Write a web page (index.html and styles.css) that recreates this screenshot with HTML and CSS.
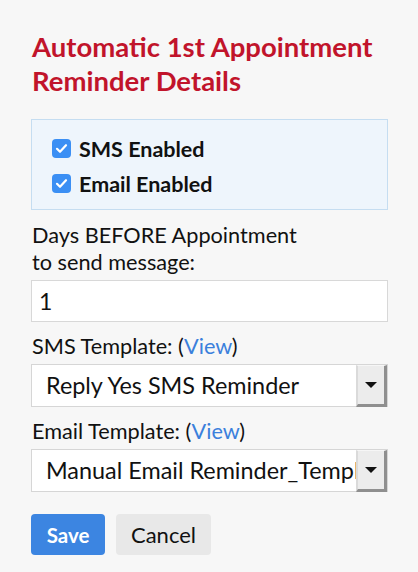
FILE: index.html
```html
<!DOCTYPE html>
<html lang="en">
<head>
<meta charset="utf-8">
<title>Reminder Details</title>
<link rel="stylesheet" href="styles.css">
</head>
<body>
<div class="panel">
  <h2 class="title">Automatic 1st Appointment Reminder Details</h2>
  <div class="channels">
    <label class="check-row">
      <span class="check"><svg width="19" height="19" viewBox="0 0 19 19"><rect x="0" y="0" width="19" height="19" rx="4" fill="#3b8ff4"/><path d="M5 9.8 L8 12.8 L14 6.2" fill="none" stroke="#fff" stroke-width="2.2" stroke-linecap="round" stroke-linejoin="round"/></svg></span>
      <span>SMS Enabled</span>
    </label>
    <label class="check-row">
      <span class="check"><svg width="19" height="19" viewBox="0 0 19 19"><rect x="0" y="0" width="19" height="19" rx="4" fill="#3b8ff4"/><path d="M5 9.8 L8 12.8 L14 6.2" fill="none" stroke="#fff" stroke-width="2.2" stroke-linecap="round" stroke-linejoin="round"/></svg></span>
      <span>Email Enabled</span>
    </label>
  </div>

  <div class="field-label days">Days BEFORE Appointment<br>to send message:</div>
  <div class="text-input">1</div>

  <div class="field-label gap">SMS Template: (<a class="link">View</a>)</div>
  <div class="select">
    <span class="select-text">Reply Yes SMS Reminder</span>
    <span class="select-btn"><span class="arrow"></span></span>
  </div>

  <div class="field-label gap">Email Template: (<a class="link">View</a>)</div>
  <div class="select select-second">
    <span class="select-text">Manual Email Reminder_Template</span>
    <span class="select-btn"><span class="arrow"></span></span>
  </div>

  <div class="actions">
    <button class="btn btn-save">Save</button>
    <button class="btn btn-cancel">Cancel</button>
  </div>
</div>
</body>
</html>
```
FILE: styles.css
```css
html, body {
  margin: 0;
  padding: 0;
  background: #f7f7f7;
}
body {
  font-family: Lato, "Open Sans", sans-serif;
  color: #111;
}
.panel {
  width: 357px;
  padding: 30px 0 0 31px;
}
.title {
  margin: 0 0 0 1px;
  font-size: 27.5px;
  line-height: 34px;
  font-weight: 700;
  color: #c1142b;
}
.channels {
  margin-top: 21px;
  background: #eef5fc;
  border: 1px solid #c5ddf1;
  padding: 11px 0 8px 20px;
}
.check-row {
  display: flex;
  align-items: center;
  height: 35px;
  font-size: 21.5px;
  font-weight: 700;
  color: #111;
}
.check {
  display: flex;
  width: 19px;
  height: 19px;
  margin-right: 8px;
}
.field-label {
  font-size: 21.7px;
  line-height: 27px;
  color: #111;
  padding-left: 1px;
}
.days {
  margin-top: 12px;
}
.gap {
  margin-top: 11px;
}
.link {
  color: #3b80dc;
  text-decoration: none;
}
.text-input {
  margin-top: 4px;
  height: 40px;
  background: #fff;
  border: 1px solid #d8d8d8;
  font-size: 23px;
  line-height: 40px;
  padding-left: 7px;
}
.select {
  margin-top: 4px;
  height: 41px;
  display: flex;
  background: #fff;
  border: 1px solid #d6d6d6;
}
.select-second {
  margin-top: 4px;
}
.select-text {
  flex: 1;
  min-width: 0;
  overflow: hidden;
  white-space: nowrap;
  font-size: 23.4px;
  line-height: 40px;
  padding-left: 14px;
}
.select-btn {
  width: 26px;
  flex: none;
  display: flex;
  align-items: center;
  justify-content: center;
  background: #ececec;
  border-left: 2px solid #dadada;
  border-top: 1px solid #f6f6f6;
  border-right: 3px solid #8f8f8f;
  border-bottom: 3px solid #8f8f8f;
  margin-bottom: -1px;
}
.arrow {
  width: 0;
  height: 0;
  border-left: 6px solid transparent;
  border-right: 6px solid transparent;
  border-top: 6px solid #111;
}
.actions {
  margin-top: 22px;
  display: flex;
  gap: 11px;
}
.btn {
  height: 41px;
  border: none;
  border-radius: 4px;
  font-family: Lato, "Open Sans", sans-serif;
  padding: 0;
}
.btn-save {
  width: 74px;
  background: #3c85e1;
  color: #fff;
  font-weight: 700;
  font-size: 20.5px;
}
.btn-cancel {
  width: 95px;
  background: #e8e8e8;
  color: #111;
  font-size: 22px;
}
```
